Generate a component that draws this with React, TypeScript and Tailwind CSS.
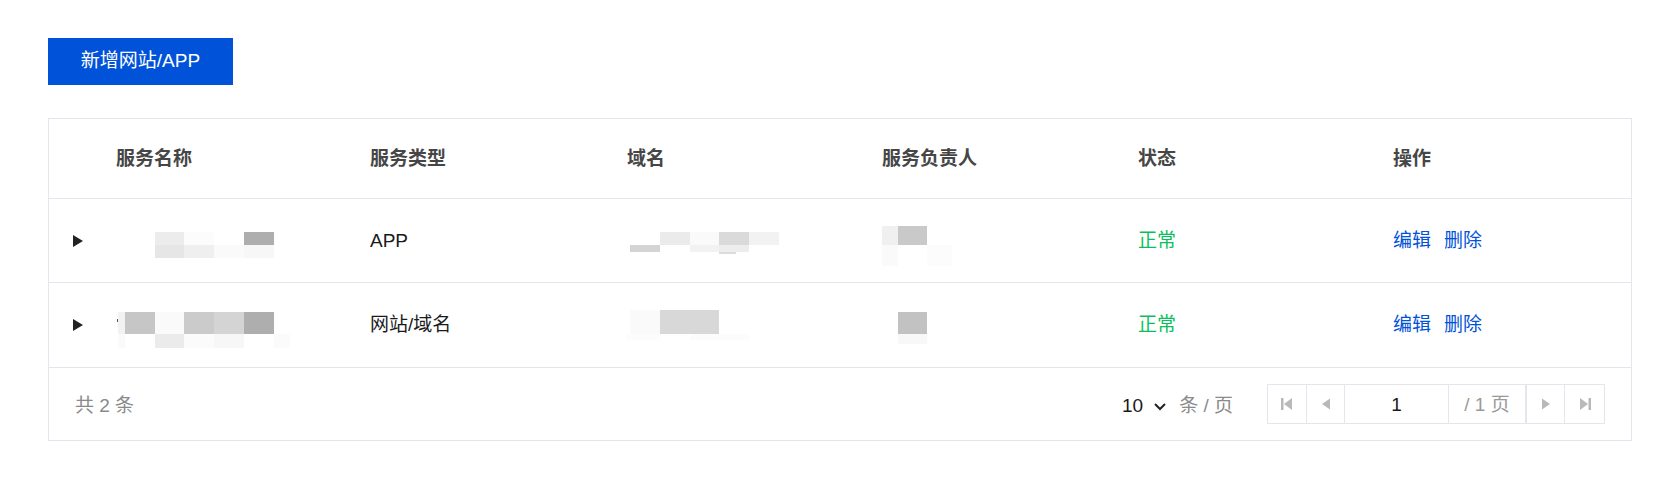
type Block = [number, number, number, number, string];

interface Row {
  name: Block[];
  type: string;
  domain: Block[];
  owner: Block[];
  status: string;
  height: string;
}

// pixelated (redacted) cells, drawn as mosaic blocks: x, y, w, h, colour
const rows: Row[] = [
  {
    name: [
      [39, 33, 29, 13, '#ececec'],
      [68, 33, 30, 13, '#fcfcfc'],
      [128, 33, 30, 13, '#aeaeae'],
      [39, 46, 29, 13, '#e6e6e6'],
      [68, 46, 30, 13, '#efefef'],
      [98, 46, 30, 13, '#fafafa'],
      [128, 46, 30, 13, '#f7f7f7'],
    ],
    type: 'APP',
    domain: [
      [33, 33, 30, 13, '#ebebeb'],
      [63, 33, 29, 13, '#fafafa'],
      [92, 33, 30, 13, '#dadada'],
      [122, 33, 30, 13, '#f2f2f2'],
      [3, 46, 30, 7, '#d4d4d4'],
      [63, 46, 29, 7, '#f2f2f2'],
      [92, 46, 30, 7, '#ededed'],
      [92, 53, 17, 2, '#dcdcdc'],
    ],
    owner: [
      [0, 27, 16, 19, '#f0f0f0'],
      [16, 27, 29, 19, '#c9c9c9'],
      [0, 46, 16, 21, '#fafafa'],
      [45, 46, 25, 21, '#fcfcfc'],
    ],
    status: '正常',
    height: 'h-[84px]',
  },
  {
    name: [
      [1, 36, 1, 3, '#555555'],
      [2, 29, 7, 22, '#f2f2f2'],
      [9, 29, 30, 22, '#c6c6c6'],
      [39, 29, 29, 22, '#fafafa'],
      [68, 29, 30, 22, '#cbcbcb'],
      [98, 29, 30, 22, '#d4d4d4'],
      [128, 29, 30, 22, '#aeaeae'],
      [2, 51, 7, 14, '#fafafa'],
      [39, 51, 29, 14, '#ebebeb'],
      [68, 51, 30, 14, '#fbfbfb'],
      [98, 51, 30, 14, '#f7f7f7'],
      [158, 51, 16, 14, '#fbfbfb'],
    ],
    type: '网站/域名',
    domain: [
      [3, 27, 30, 24, '#fafafa'],
      [33, 27, 59, 24, '#d8d8d8'],
      [0, 51, 33, 6, '#fcfcfc'],
      [63, 51, 59, 6, '#fcfcfc'],
    ],
    owner: [
      [16, 29, 29, 22, '#c2c2c2'],
      [16, 51, 29, 10, '#f8f8f8'],
    ],
    status: '正常',
    height: 'h-[85px]',
  },
];

const headers = ['服务名称', '服务类型', '域名', '服务负责人', '状态', '操作'];

const cols = 'grid grid-cols-[67px_254px_257px_255px_256px_255px_1fr]';

function Mosaic({ blocks, w, h }: { blocks: Block[]; w: number; h: number }) {
  return (
    <svg width={w} height={h} className="overflow-visible">
      {blocks.map(([x, y, bw, bh, c], i) => (
        <rect key={i} x={x} y={y} width={bw} height={bh} fill={c} />
      ))}
    </svg>
  );
}

function PagerIcon({ kind }: { kind: 'first' | 'prev' | 'next' | 'last' }) {
  const c = '#b9b9b9';
  return (
    <svg width="16" height="16" viewBox="0 0 16 16">
      {kind === 'first' && (
        <>
          <rect x="2" y="2" width="2.5" height="12" fill={c} />
          <path d="M13 2 L5 8 L13 14 Z" fill={c} />
        </>
      )}
      {kind === 'prev' && <path d="M12 2.5 L4 8 L12 13.5 Z" fill={c} />}
      {kind === 'next' && <path d="M4 2.5 L12 8 L4 13.5 Z" fill={c} />}
      {kind === 'last' && (
        <>
          <path d="M3 2 L11 8 L3 14 Z" fill={c} />
          <rect x="11.5" y="2" width="2.5" height="12" fill={c} />
        </>
      )}
    </svg>
  );
}

export default function App() {
  return (
    <div className="min-h-[498px] bg-white pl-[48px] pr-[40px] pt-[38px] text-[19px] font-['Liberation_Sans','Noto_Sans_CJK_SC',sans-serif]">
      <button className="flex h-[47px] w-[185px] items-center justify-center bg-[#0052d9] text-[19px] text-white">
        新增网站/APP
      </button>

      <div className="mt-[33px] border border-[#e5e5ee]">
        {/* Header */}
        <div className={`${cols} h-[80px] items-center border-b border-[#e5e5ee] pt-[2px] font-semibold text-[#464646]`}>
          <div />
          {headers.map((h) => (
            <div key={h}>{h}</div>
          ))}
        </div>

        {/* Rows */}
        {rows.map((row, i) => (
          <div key={i} className={`${cols} ${row.height} items-center border-b border-[#e5e5ee] text-[#1a1a1a]`}>
            <div className="pl-[24px]">
              <svg width="10" height="12" viewBox="0 0 10 12">
                <path d="M0 0 L10 6 L0 12 Z" fill="#222" />
              </svg>
            </div>
            <div className="h-full">
              <Mosaic blocks={row.name} w={254} h={84} />
            </div>
            <div>{row.type}</div>
            <div className="h-full">
              <Mosaic blocks={row.domain} w={255} h={84} />
            </div>
            <div className="h-full">
              <Mosaic blocks={row.owner} w={256} h={84} />
            </div>
            <div className="text-[#0abf5b]">{row.status}</div>
            <div className="flex gap-[13px] text-[#0052d9]">
              <span>编辑</span>
              <span>删除</span>
            </div>
          </div>
        ))}

        {/* Footer */}
        <div className="flex h-[72px] items-center justify-between pl-[26px] pr-[26px]">
          <div className="mt-[5px] text-[#8a8a8a]">共 2 条</div>
          <div className="flex items-center">
            <div className="mt-[5px] flex items-center">
              <span className="text-[#1a1a1a]">10</span>
              <svg width="12" height="8" viewBox="0 0 12 8" className="ml-[11px]">
                <path d="M1 1 L6 6 L11 1" stroke="#222" strokeWidth="2" fill="none" />
              </svg>
              <span className="ml-[13px] text-[#8a8a8a]">条 / 页</span>
            </div>
            <div className="ml-[34px] flex h-[40px] border border-[#e5e5ee]">
              <div className="flex w-[38px] items-center justify-center">
                <PagerIcon kind="first" />
              </div>
              <div className="flex w-[38px] items-center justify-center border-l border-[#e5e5ee]">
                <PagerIcon kind="prev" />
              </div>
              <div className="flex w-[104px] items-center justify-center border-l border-[#e5e5ee] pt-[3px] text-[#1a1a1a]">
                1
              </div>
              <div className="flex w-[78px] items-center justify-center border-x border-[#e5e5ee] pt-[3px] text-[#9a9a9a]">
                / 1 页
              </div>
              <div className="flex w-[38px] items-center justify-center border-l border-[#e5e5ee]">
                <PagerIcon kind="next" />
              </div>
              <div className="flex w-[40px] items-center justify-center border-l border-[#e5e5ee]">
                <PagerIcon kind="last" />
              </div>
            </div>
          </div>
        </div>
      </div>
    </div>
  );
}
